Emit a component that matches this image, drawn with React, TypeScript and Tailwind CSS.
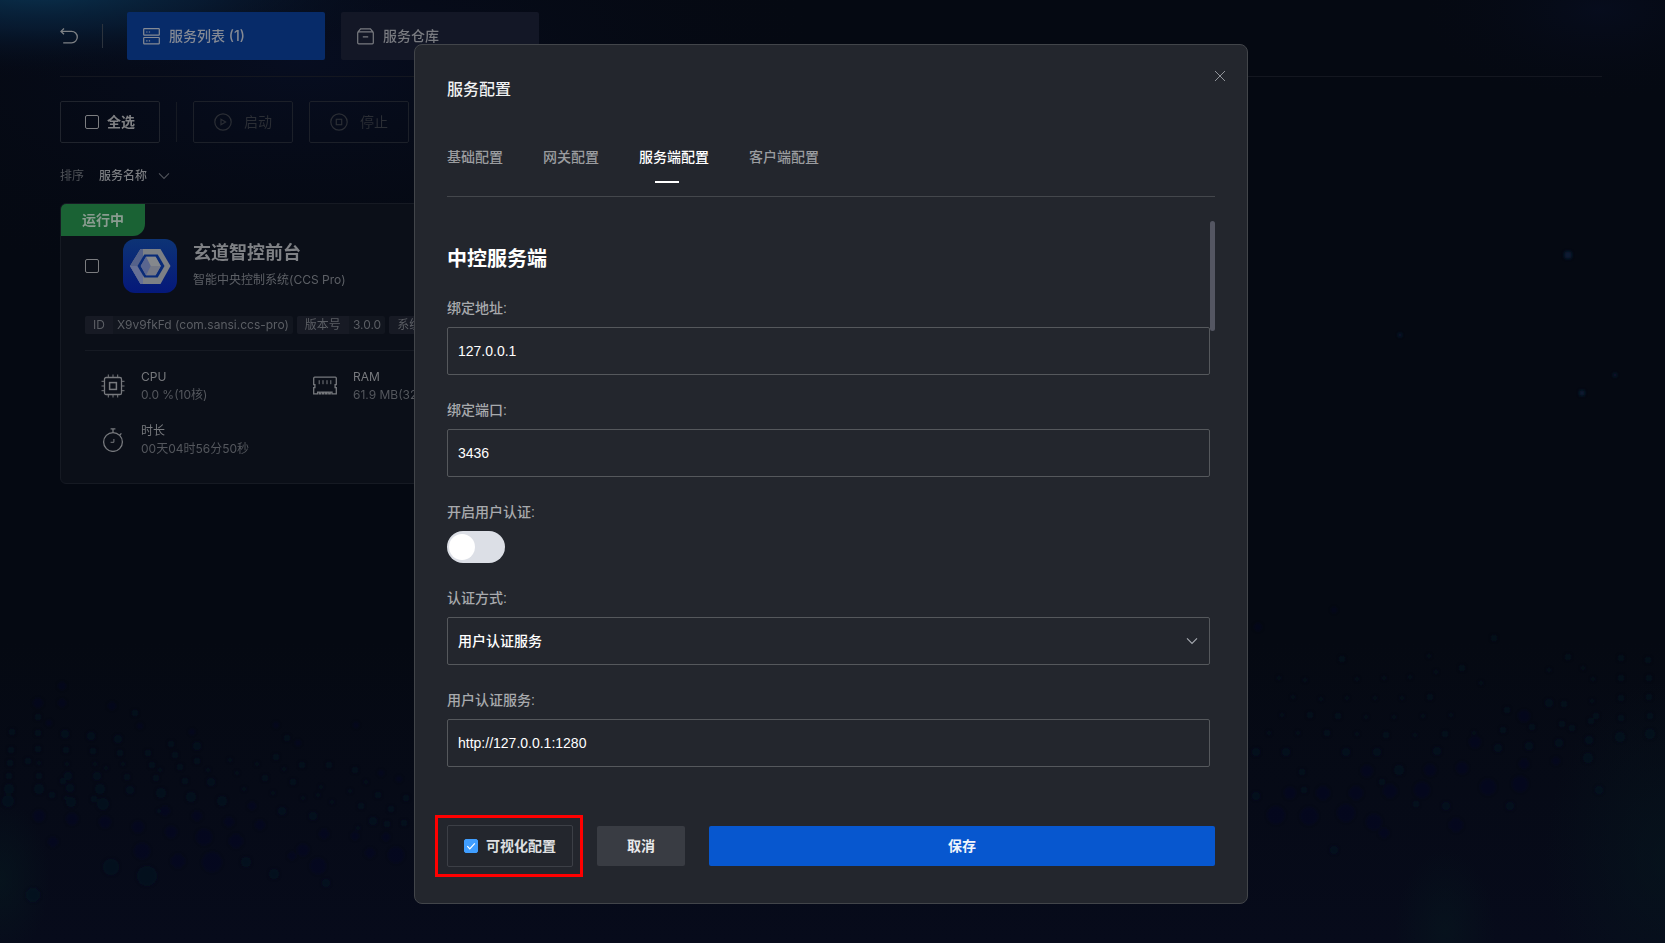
import { useState, type ReactNode } from "react";
import { clsx } from "clsx";

type Dot = [x: number, y: number, r: number];

const CONFIG_TABS = ["基础配置", "网关配置", "服务端配置", "客户端配置"];

const TEAL_DOTS: Dot[] = [
  [38, 717, 3], [38, 733, 3], [38, 749, 3], [39, 763, 2], [39, 776, 3], [39, 789, 5], [12, 732, 3], [11, 750, 3],
  [10, 763, 3], [9, 776, 3], [9, 789, 5], [8, 801, 6], [28, 761, 3], [65, 734, 4], [66, 750, 3], [67, 764, 2],
  [68, 776, 4], [70, 788, 4], [71, 802, 5], [52, 795, 3], [63, 781, 3], [66, 798, 2], [91, 736, 4], [93, 751, 3],
  [95, 764, 2], [97, 776, 4], [100, 789, 5], [103, 804, 6], [94, 799, 3], [106, 768, 2], [118, 739, 4], [120, 753, 3],
  [123, 764, 2], [127, 777, 3], [130, 790, 4], [135, 713, 3], [148, 753, 3], [152, 765, 3], [156, 778, 3],
  [161, 793, 5], [159, 811, 2], [160, 770, 2], [171, 744, 3], [175, 755, 3], [180, 767, 3], [185, 781, 3],
  [191, 797, 5], [197, 746, 4], [197, 761, 3], [208, 770, 2], [211, 782, 4], [222, 801, 5], [230, 760, 2],
  [237, 773, 2], [244, 789, 2], [257, 764, 2], [265, 778, 3], [273, 793, 2], [282, 811, 4], [287, 738, 3],
  [276, 757, 3], [284, 769, 2], [293, 782, 3], [303, 798, 2], [313, 816, 4], [302, 765, 3], [318, 795, 2],
  [329, 765, 3], [332, 802, 2], [321, 787, 2], [350, 791, 2], [355, 770, 3], [361, 806, 3], [373, 821, 4],
  [366, 782, 2], [378, 795, 3], [391, 809, 3], [387, 824, 3], [404, 823, 3], [406, 798, 3], [358, 828, 2],
  [111, 867, 8], [147, 876, 10], [274, 874, 5], [326, 883, 4], [33, 895, 7], [246, 862, 5],
  [1282, 715, 2], [1305, 680, 2], [1342, 659, 3], [1279, 678, 2], [1357, 679, 2], [1384, 678, 2], [1410, 677, 2],
  [1429, 656, 2], [1436, 672, 2], [1462, 668, 3], [1481, 683, 2], [1494, 638, 3], [1549, 670, 2], [1568, 657, 3],
  [1583, 668, 2], [1621, 658, 3], [1621, 678, 3], [1621, 698, 3], [1621, 718, 3], [1620, 737, 5], [1648, 660, 3],
  [1649, 678, 3], [1649, 697, 3], [1650, 716, 3], [1650, 734, 5], [1593, 679, 2], [1592, 701, 2], [1596, 716, 3],
  [1591, 721, 3], [1589, 740, 4], [1588, 758, 5], [1564, 704, 3], [1549, 703, 4], [1562, 724, 3], [1572, 728, 3],
  [1559, 743, 4], [1532, 727, 3], [1529, 746, 4], [1507, 710, 3], [1503, 730, 3], [1498, 748, 4], [1474, 733, 2],
  [1451, 715, 2], [1445, 734, 3], [1437, 751, 4], [1430, 697, 3], [1423, 716, 2], [1415, 735, 2], [1402, 698, 2],
  [1394, 717, 2], [1386, 735, 3], [1377, 752, 4], [1375, 698, 2], [1366, 717, 2], [1357, 734, 2], [1346, 752, 4],
  [1347, 698, 2], [1338, 716, 3], [1327, 733, 3], [1321, 699, 2], [1310, 715, 3], [1298, 733, 2], [1286, 752, 4],
  [1293, 697, 2], [1269, 733, 2], [1256, 752, 4], [1302, 772, 3], [1304, 790, 3], [1382, 782, 3], [1399, 770, 5],
  [1416, 804, 3], [1446, 806, 4], [1510, 806, 4], [1599, 790, 4], [1256, 796, 4], [1334, 850, 4],
];

const BLUE_DOTS: Dot[] = [
  [62, 686, 4], [38, 703, 5], [62, 703, 4], [112, 706, 4], [49, 723, 3], [140, 726, 3], [39, 816, 6], [72, 819, 6],
  [105, 822, 6], [138, 827, 6], [171, 832, 6], [204, 837, 8], [236, 841, 7], [165, 811, 5], [197, 816, 5],
  [229, 822, 5], [260, 825, 5], [252, 806, 4], [324, 834, 5], [355, 836, 4], [386, 837, 4], [356, 725, 3],
  [276, 725, 3], [298, 743, 3], [192, 732, 3], [53, 842, 5], [142, 851, 8], [178, 861, 7], [212, 862, 10],
  [303, 850, 6], [318, 866, 8], [292, 856, 4], [370, 853, 5], [396, 855, 8], [399, 779, 3], [381, 773, 3],
  [1367, 771, 6], [1430, 770, 6], [1462, 768, 6], [1524, 764, 5], [1556, 761, 4], [1290, 793, 6], [1323, 793, 7],
  [1356, 793, 7], [1390, 791, 7], [1422, 790, 8], [1488, 787, 8], [1520, 784, 8], [1276, 815, 9], [1309, 816, 9],
  [1346, 813, 9], [1374, 822, 8], [1456, 825, 7], [1384, 833, 5], [1475, 742, 6], [1524, 716, 6],
  [1334, 610, 3], [1258, 627, 4],
];

const SPARKS: Dot[] = [
  [1400, 335, 2], [1582, 393, 3], [1568, 255, 4], [1615, 375, 2],
];

function Backdrop() {
  return (
    <svg
      className="pointer-events-none absolute inset-0 -z-10 h-full w-full"
      viewBox="0 0 1665 943"
      preserveAspectRatio="none"
      aria-hidden="true"
    >
      <defs>
        <radialGradient id="glow-corner">
          <stop offset="0" stopColor="#0a3350" />
          <stop offset="0.45" stopColor="#08203a" stopOpacity="0.7" />
          <stop offset="1" stopColor="#060a18" stopOpacity="0" />
        </radialGradient>
        <radialGradient id="glow-blue">
          <stop offset="0" stopColor="#0a1436" />
          <stop offset="1" stopColor="#060a18" stopOpacity="0" />
        </radialGradient>
        <radialGradient id="glow-teal">
          <stop offset="0" stopColor="#07191f" />
          <stop offset="1" stopColor="#07191f" stopOpacity="0" />
        </radialGradient>
        <linearGradient id="floor" x1="0" y1="0" x2="0" y2="1">
          <stop offset="0" stopColor="#070b1b" stopOpacity="0" />
          <stop offset="1" stopColor="#070b1b" />
        </linearGradient>
        <filter id="soft">
          <feGaussianBlur stdDeviation="1.5" />
        </filter>
      </defs>
      <rect width="1665" height="943" fill="#050912" />
      <ellipse cx="300" cy="60" rx="520" ry="240" fill="url(#glow-blue)" opacity="0.4" />
      <ellipse cx="40" cy="-12" rx="380" ry="90" fill="url(#glow-corner)" />
      <ellipse cx="1600" cy="10" rx="180" ry="90" fill="url(#glow-blue)" opacity="0.3" />
      <rect y="640" width="1665" height="303" fill="url(#floor)" />
      <ellipse cx="0" cy="880" rx="50" ry="80" fill="url(#glow-teal)" opacity="0.6" />
      <ellipse cx="1665" cy="860" rx="120" ry="180" fill="url(#glow-teal)" opacity="0.5" />
      <ellipse cx="1445" cy="930" rx="50" ry="80" fill="url(#glow-teal)" opacity="0.5" />
      <g filter="url(#soft)">
        {TEAL_DOTS.map(([x, y, r]) => (
          <circle key={`${x}-${y}`} cx={x} cy={y} r={r} fill="#0b1d28" opacity="0.45" />
        ))}
        {BLUE_DOTS.map(([x, y, r]) => (
          <circle key={`${x}-${y}`} cx={x} cy={y} r={r} fill="#0a1330" opacity="0.22" />
        ))}
        {SPARKS.map(([x, y, r]) => (
          <circle key={`${x}-${y}`} cx={x} cy={y} r={r} fill="#0a2142" opacity="0.7" />
        ))}
      </g>
    </svg>
  );
}

function BackIcon() {
  return (
    <svg width="18" height="16" viewBox="0 0 18 16" fill="none" stroke="currentColor" strokeWidth="1.3">
      <path d="M1 3.4h10.6a5.7 5.7 0 0 1 0 11.4H3.2" />
      <path d="M4 .5 1 3.4l3 2.8" />
    </svg>
  );
}

function ServerIcon() {
  return (
    <svg width="17" height="17" viewBox="0 0 17 17" fill="none" stroke="currentColor" strokeWidth="1.2">
      <rect x="0.7" y="0.7" width="15.6" height="6.4" rx="0.6" />
      <rect x="0.7" y="9.5" width="15.6" height="6.4" rx="0.6" />
      <path d="M3.2 4h1.3M5.8 4h1.3M3.2 12.8h1.3M5.8 12.8h1.3" />
    </svg>
  );
}

function StoreIcon() {
  return (
    <svg width="17" height="17" viewBox="0 0 17 17" fill="none" stroke="currentColor" strokeWidth="1.2">
      <rect x="0.7" y="3.8" width="15.6" height="12" rx="1" />
      <path d="M1 4 3.6.8h9.8L16 4M5.8 8.8h5.4" />
    </svg>
  );
}

function CpuIcon() {
  return (
    <svg width="24" height="24" viewBox="0 0 24 24" fill="none" stroke="currentColor" strokeWidth="1.3">
      <rect x="3.5" y="3.5" width="17" height="17" rx="1.6" />
      <rect x="8.6" y="8.6" width="6.8" height="6.8" strokeWidth="1.5" />
      <path
        strokeWidth="1"
        d="M7.3 3.5v-3M12 3.5v-3M16.7 3.5v-3M7.3 20.5v3M12 20.5v3M16.7 20.5v3M3.5 7.3h-3M3.5 12h-3M3.5 16.7h-3M20.5 7.3h3M20.5 12h3M20.5 16.7h3"
      />
    </svg>
  );
}

function RamIcon() {
  return (
    <svg width="24" height="24" viewBox="0 0 24 24" fill="none" stroke="currentColor" strokeWidth="1.3">
      <path d="M1.7 3.2h20.6c.6 0 1 .4 1 1v6.4h-1.2v3h1.2v6.2H19v-1.6h-1.8v1.6h-1.4v-1.6H14v1.6h-1.3v-1.6h-1.8v1.6H9.6v-1.6H7.8v1.6H6.4v-1.6H4.6v1.6H.7v-6.2h1.2v-3H.7V4.2c0-.6.4-1 1-1Z" />
      <path strokeWidth="1" d="M6.2 6.2v4M10 6.2v4M14 6.2v4M17.8 6.2v4" />
    </svg>
  );
}

function TimerIcon() {
  return (
    <svg width="24" height="24" viewBox="0 0 24 24" fill="none" stroke="currentColor" strokeWidth="1.3">
      <circle cx="12" cy="14" r="9.4" />
      <path d="M9.6.8h4.8M12 .8v3.8M18.6 7.2l1.8-1.8" />
      <path strokeWidth="1" d="M12.9 11v3.3H9.6" />
    </svg>
  );
}

function ProductLogo() {
  return (
    <svg width="54" height="54" viewBox="0 0 54 54" aria-hidden="true">
      <defs>
        <linearGradient id="logo-bg" x1="0" y1="0" x2="0" y2="1">
          <stop offset="0" stopColor="#0d3375" />
          <stop offset="1" stopColor="#05187a" />
        </linearGradient>
      </defs>
      <rect width="54" height="54" rx="12" fill="url(#logo-bg)" />
      <path d="M7 27 17.5 10h20L47.5 27l-10 18h-20Z" fill="#7c8085" />
      <path d="M7 27 17.5 10H20v35h-2.5Z" fill="#55628a" />
      <path d="M7 27 17.5 45H20v-8.5L14.5 27Z" fill="#667095" />
      <path d="M14.5 27 21.3 15.6h13.4L41.5 27l-6.8 11.4H21.3Z" fill="#092b78" />
      <path d="M17.7 27 23 17.8h9.6L37.8 27l-5.2 9.2H23Z" fill="#6b738f" />
      <path d="M23 17.8h9.6L37.8 27H27.6Z" fill="#85888c" />
      <path d="M27.6 27h10.2l-5.2 9.2H23Z" fill="#757986" />
      <path d="M17.7 27 23 17.8l4.6 9.2L23 36.2Z" fill="#5a668f" />
    </svg>
  );
}

function ChevronDown({ className }: { className?: string }) {
  return (
    <svg className={className} width="12" height="8" viewBox="0 0 12 8" fill="none" stroke="currentColor" strokeWidth="1.1">
      <path d="m1 1.4 5 5 5-5" />
    </svg>
  );
}

function BareCheckbox({ label }: { label: string }) {
  return (
    <input
      type="checkbox"
      aria-label={label}
      className="size-3.5 shrink-0 appearance-none rounded-xs border border-[#7c7d80] checked:bg-[#409eff]"
    />
  );
}

function Tag({ label, value }: { label: string; value: string }) {
  return (
    <div className="flex h-[18px] shrink-0 items-center overflow-hidden rounded-xs bg-[#12161f] text-xs leading-[18px] text-[#5b5e64]">
      <span className="bg-[#171a24] px-2">{label}</span>
      <span className="px-1">{value}</span>
    </div>
  );
}

function Metric({ icon, name, value }: { icon: ReactNode; name: string; value: string }) {
  return (
    <div className="flex items-center gap-4 text-[#77797d]">
      {icon}
      <div className="text-xs leading-[18px] whitespace-nowrap">
        <div>{name}</div>
        <div className="text-[#54575d]">{value}</div>
      </div>
    </div>
  );
}

function ServiceCard() {
  return (
    <article className="mt-[17px] w-full max-w-[506px] overflow-hidden rounded-md border border-[#161a23] bg-[#0b0f18] pb-[25px]">
      <div className="flex h-8 w-[84px] items-center justify-center rounded-br-xl bg-[#1a6234] text-sm font-bold text-[#8a9c90]">
        运行中
      </div>
      <div className="px-6">
        <div className="mt-[3px] flex items-center gap-6">
          <BareCheckbox label="选择 玄道智控前台" />
          <div className="flex gap-4">
            <ProductLogo />
            <div>
              <h3 className="text-lg leading-7 font-bold text-[#7f8185]">玄道智控前台</h3>
              <p className="text-xs leading-[26px] text-[#5d6066]">智能中央控制系统(CCS Pro)</p>
            </div>
          </div>
        </div>
        <div className="mt-[23px] flex gap-1 overflow-hidden">
          <Tag label="ID" value="X9v9fkFd (com.sansi.ccs-pro)" />
          <Tag label="版本号" value="3.0.0" />
          <Tag label="系统" value="macOS" />
        </div>
        <div className="mt-4 grid grid-cols-2 gap-y-[18px] border-t border-[#161a23] px-4 pt-[17px]">
          <Metric icon={<CpuIcon />} name="CPU" value="0.0 %(10核)" />
          <Metric icon={<RamIcon />} name="RAM" value="61.9 MB(32 GB)" />
          <Metric icon={<TimerIcon />} name="时长" value="00天04时56分50秒" />
        </div>
      </div>
    </article>
  );
}

function ServicePage() {
  return (
    <main className="px-15 pt-3">
      <header className="flex items-center border-b border-[#141720] pb-4">
        <button type="button" aria-label="返回" className="text-[#7e8185]">
          <BackIcon />
        </button>
        <span className="ml-6 h-6 w-px bg-[#2c333d]" />
        <nav className="ml-6 flex gap-4 text-sm">
          <button
            type="button"
            className="flex h-12 w-[198px] items-center gap-[9px] rounded-xs bg-[#072b69] px-4 font-medium text-[#858a94]"
          >
            <ServerIcon />
            服务列表 (1)
          </button>
          <button
            type="button"
            className="flex h-12 w-[198px] items-center gap-[9px] rounded-xs bg-[#131726] px-4 font-medium text-[#797b80]"
          >
            <StoreIcon />
            服务仓库
          </button>
        </nav>
      </header>

      <div className="mt-6 flex items-center gap-4">
        <label className="flex h-[42px] w-[100px] items-center justify-center gap-2 rounded-xs border border-[#20242d] text-sm font-bold text-[#808184]">
          <BareCheckbox label="全选" />
          全选
        </label>
        <span className="h-10 w-px bg-[#161a23]" />
        <button
          type="button"
          disabled
          className="flex h-[42px] w-[100px] items-center justify-center gap-3 rounded-xs border border-[#1c2029] text-sm text-[#2b2e35]"
        >
          <svg width="18" height="18" viewBox="0 0 18 18" fill="none" stroke="currentColor" strokeWidth="1.2">
            <circle cx="9" cy="9" r="8.2" />
            <path d="M7 6.3v5.4L11.6 9Z" />
          </svg>
          启动
        </button>
        <button
          type="button"
          disabled
          className="flex h-[42px] w-[100px] items-center justify-center gap-3 rounded-xs border border-[#1c2029] text-sm text-[#2b2e35]"
        >
          <svg width="18" height="18" viewBox="0 0 18 18" fill="none" stroke="currentColor" strokeWidth="1.2">
            <circle cx="9" cy="9" r="8.2" />
            <rect x="6.3" y="6.3" width="5.4" height="5.4" />
          </svg>
          停止
        </button>
      </div>

      <div className="mt-[23px] flex h-5 items-center text-xs">
        <span className="text-[#505359]">排序</span>
        <button type="button" className="ml-[15px] flex items-center gap-[11px] font-medium text-[#7b7d81]">
          服务名称
          <ChevronDown className="text-[#50535a]" />
        </button>
      </div>

      <ServiceCard />
    </main>
  );
}

interface FieldProps {
  id: string;
  label: string;
  children: ReactNode;
}

function Field({ id, label, children }: FieldProps) {
  return (
    <div>
      <label htmlFor={id} className="mb-2 block w-fit text-sm leading-[22px] font-medium text-[#a8aaad]">
        {label}
      </label>
      {children}
    </div>
  );
}

const inputClassName =
  "block h-12 w-full appearance-none rounded-xs border border-[#55585c] bg-transparent px-2.5 text-sm font-medium text-white outline-none focus:border-[#409eff]";

function ConfigDialog() {
  const [activeTab, setActiveTab] = useState("服务端配置");
  const [authEnabled, setAuthEnabled] = useState(false);
  const [visual, setVisual] = useState(true);

  return (
    <section
      role="dialog"
      aria-label="服务配置"
      className="relative w-full max-w-[834px] rounded-lg border border-[#42454a] bg-[#23262d] px-8 pt-[33px] pb-9 font-['Liberation_Sans','Noto_Sans_CJK_SC',sans-serif]"
    >
      <h2 className="text-base leading-6 font-medium text-[#f0f1f2]">服务配置</h2>
      <button type="button" aria-label="关闭" className="absolute top-[19px] right-[15px] p-1.5 text-[#909399]">
        <svg width="12" height="12" viewBox="0 0 12 12" fill="none" stroke="currentColor" strokeWidth="1">
          <path d="m1 1 10 10M11 1 1 11" />
        </svg>
      </button>

      <div role="tablist" className="mt-[43px] flex gap-10 border-b border-[#44474c] pb-[13px]">
        {CONFIG_TABS.map((tab) => {
          const active = tab === activeTab;
          return (
            <button
              key={tab}
              type="button"
              role="tab"
              aria-selected={active}
              onClick={() => setActiveTab(tab)}
              className={clsx("text-sm leading-6 font-medium", active ? "text-white" : "text-[#9a9c9f]")}
            >
              {tab}
              <span className={clsx("mt-3 ml-4 block h-0.5 w-6", active && "bg-white")} />
            </button>
          );
        })}
      </div>

      <div className="mt-6 flex">
        <form className="flex-1 space-y-6 pt-6 pb-[18px]">
          <h3 className="text-xl leading-7 font-bold text-white">中控服务端</h3>
          <Field id="bind-host" label="绑定地址:">
            <input id="bind-host" type="text" defaultValue="127.0.0.1" className={inputClassName} />
          </Field>
          <Field id="bind-port" label="绑定端口:">
            <input id="bind-port" type="text" defaultValue="3436" className={inputClassName} />
          </Field>
          <Field id="auth-enabled" label="开启用户认证:">
            <div className="relative h-8 w-[58px]">
              <input
                id="auth-enabled"
                type="checkbox"
                role="switch"
                checked={authEnabled}
                onChange={(event) => setAuthEnabled(event.target.checked)}
                className="block h-8 w-[58px] appearance-none rounded-full bg-[#dcdfe6] checked:bg-[#409eff]"
              />
              <span
                className={clsx(
                  "pointer-events-none absolute top-[3px] size-[26px] rounded-full bg-white",
                  authEnabled ? "right-0.5" : "left-0.5"
                )}
              />
            </div>
          </Field>
          <Field id="auth-mode" label="认证方式:">
            <div className="relative">
              <select id="auth-mode" defaultValue="service" className={inputClassName}>
                <option value="service">用户认证服务</option>
              </select>
              <ChevronDown className="pointer-events-none absolute top-5 right-3 text-[#a8abb2]" />
            </div>
          </Field>
          <Field id="auth-url" label="用户认证服务:">
            <input id="auth-url" type="text" defaultValue="http://127.0.0.1:1280" className={inputClassName} />
          </Field>
        </form>
        <div className="w-[5px]">
          <div className="h-[110px] rounded-full bg-[#545662]" />
        </div>
      </div>

      <footer className="mt-10 flex items-center gap-6 text-sm font-bold">
        <div className="relative">
          <label className="flex h-[42px] items-center gap-2 rounded-xs border border-[#3c3f46] px-4 text-[#dfe0e2]">
            <span className="relative size-3.5">
              <input
                type="checkbox"
                checked={visual}
                onChange={(event) => setVisual(event.target.checked)}
                className="block size-3.5 appearance-none rounded-xs border border-[#7c7d80] checked:border-[#409eff] checked:bg-[#409eff]"
              />
              {visual && (
                <svg
                  className="pointer-events-none absolute inset-0"
                  width="14"
                  height="14"
                  viewBox="0 0 14 14"
                  fill="none"
                  stroke="#fff"
                  strokeWidth="1.2"
                >
                  <path d="m3.3 7.2 2.5 2.7 5-5.6" />
                </svg>
              )}
            </span>
            可视化配置
          </label>
          <span className="pointer-events-none absolute -inset-y-2.5 -right-2.5 -left-3 border-3 border-[#ff0000]" />
        </div>
        <button type="button" className="h-10 w-[88px] rounded-xs bg-[#393c43] text-[#e8e9ea]">
          取消
        </button>
        <button type="button" className="h-10 flex-1 rounded-xs bg-[#0757cf] text-[#f0f4fb]">
          保存
        </button>
      </footer>
    </section>
  );
}

export default function App() {
  return (
    <div className="relative isolate min-h-screen overflow-hidden bg-[#050912] pr-[3px] font-[Inter,'Noto_Sans_CJK_SC',sans-serif]">
      <Backdrop />
      <ServicePage />
      <div className="absolute inset-0 flex items-start justify-center overflow-y-auto pt-11 pr-[3px]">
        <ConfigDialog />
      </div>
    </div>
  );
}
